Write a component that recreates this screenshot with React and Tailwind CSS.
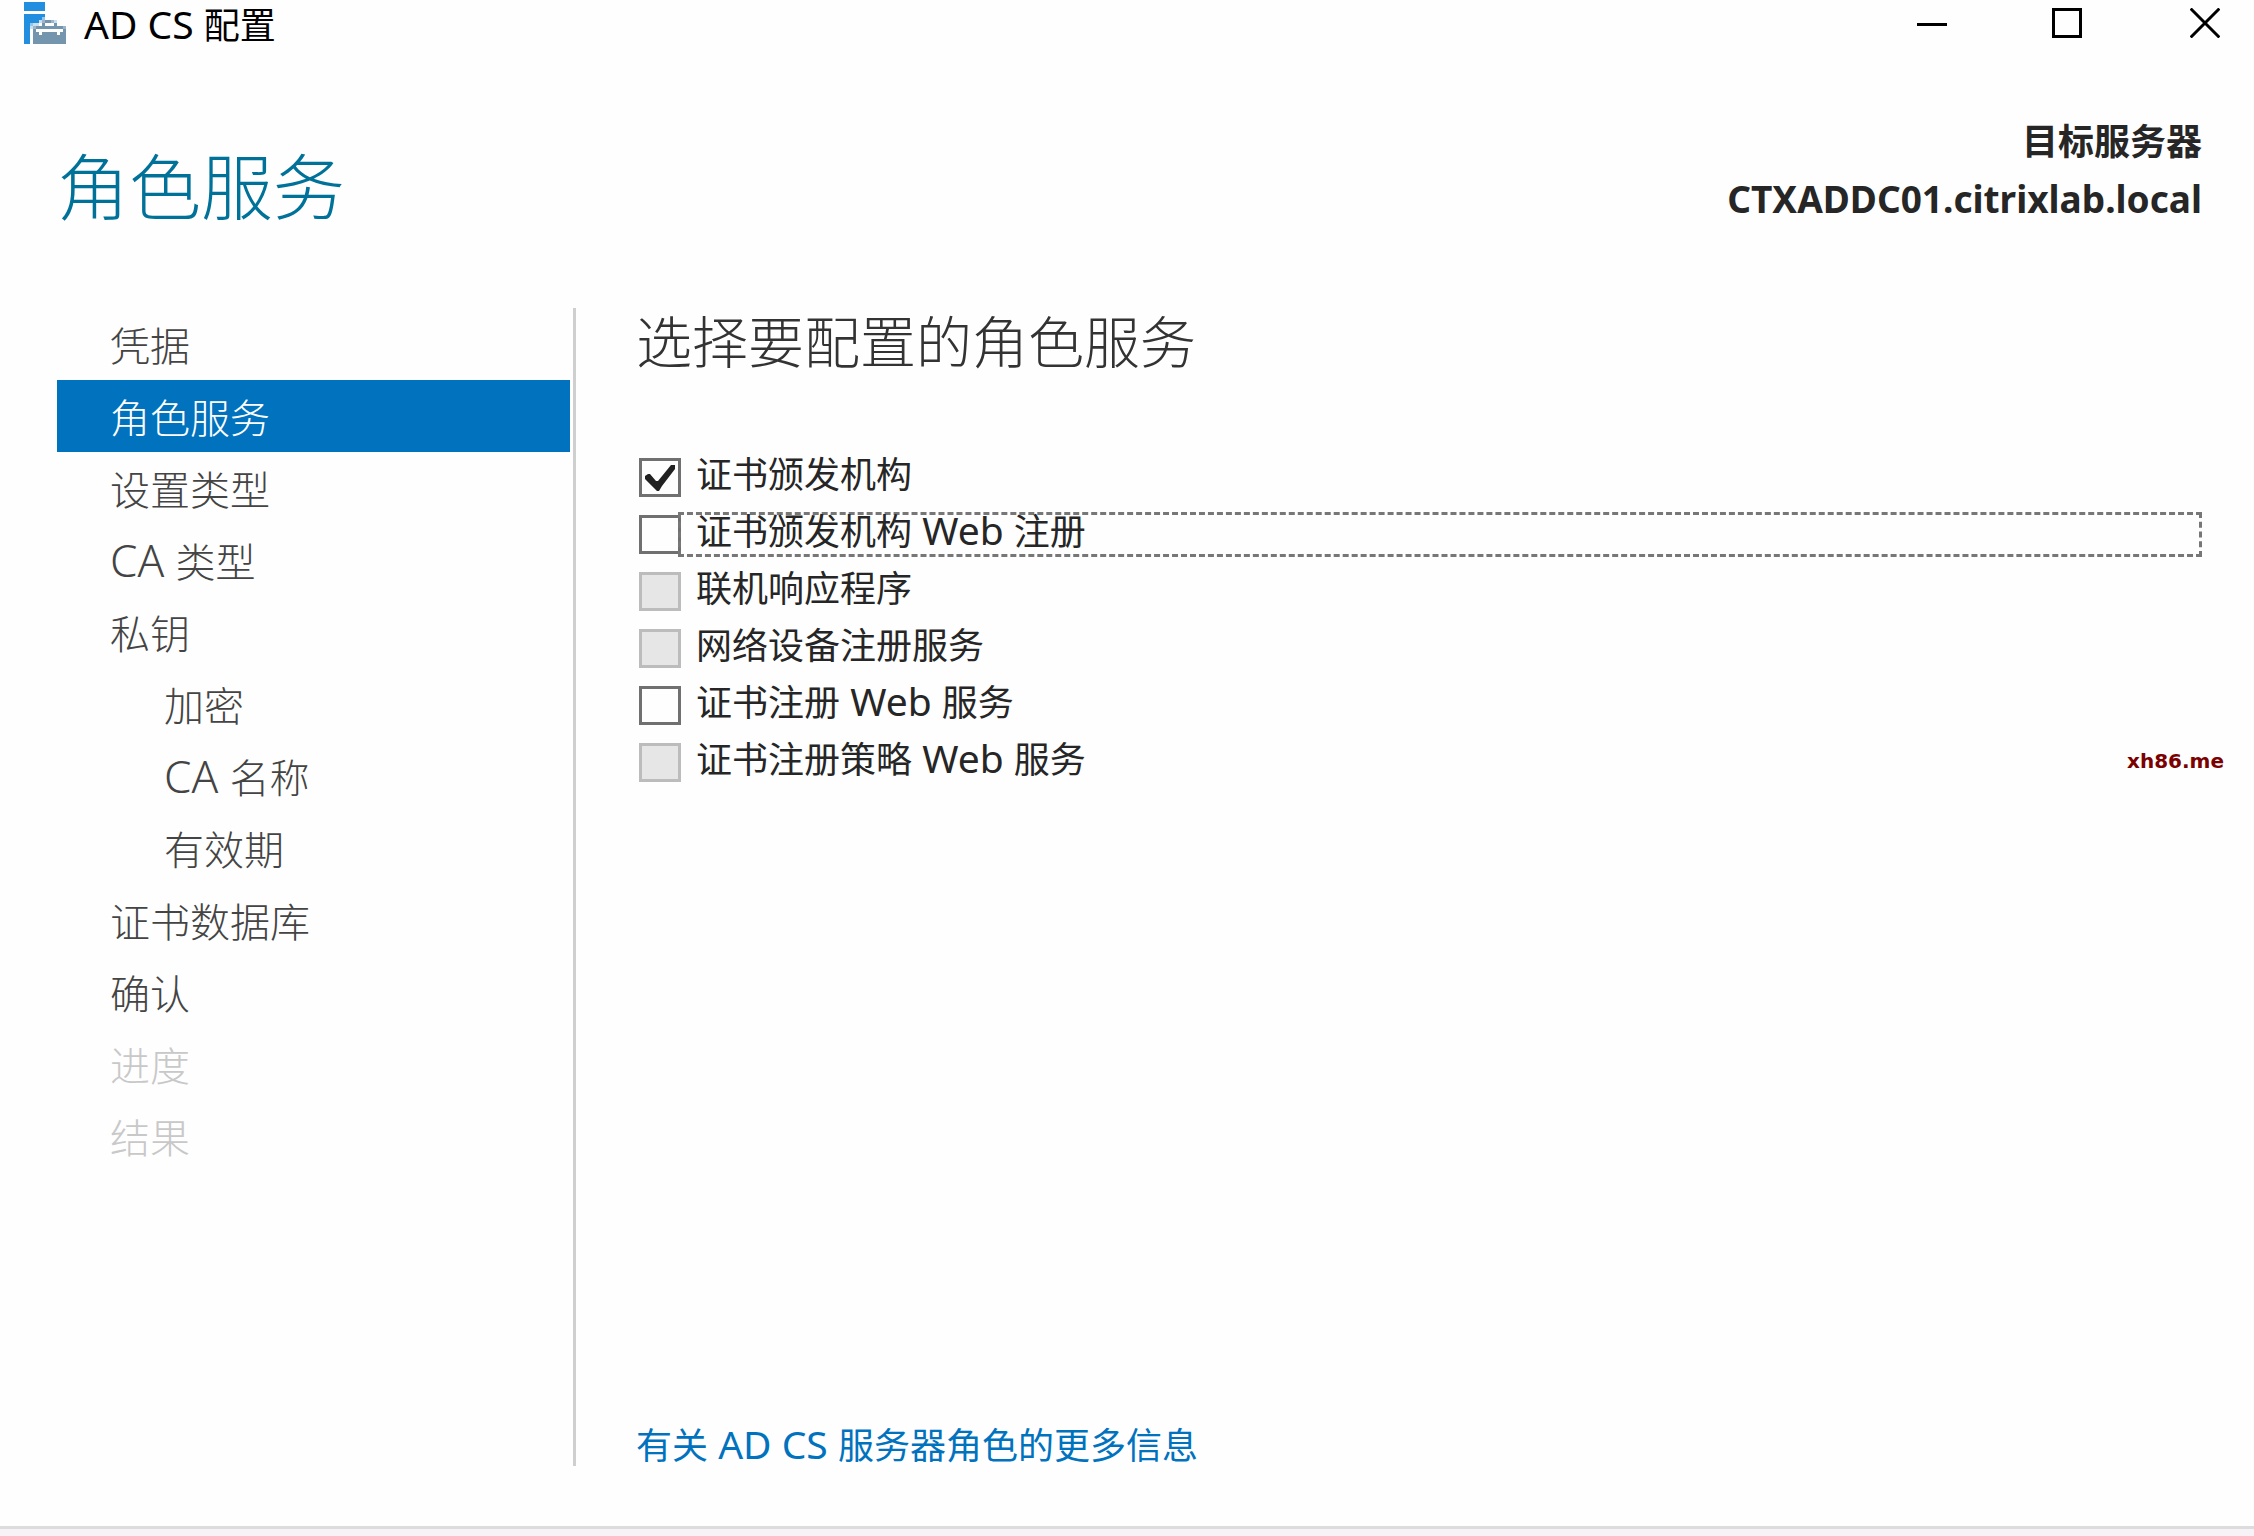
import React from 'react';

const STEPS = [
  { name: '凭据' },
  { name: '角色服务', active: true },
  { name: '设置类型' },
  { name: 'CA 类型' },
  { name: '私钥' },
  { name: '加密', nested: true },
  { name: 'CA 名称', nested: true },
  { name: '有效期', nested: true },
  { name: '证书数据库' },
  { name: '确认' },
  { name: '进度', disabled: true },
  { name: '结果', disabled: true }
];

const ROLES = [
  { id: 'ca', name: '证书颁发机构', checked: true },
  { id: 'ca-web', name: '证书颁发机构 Web 注册', focused: true },
  { id: 'responder', name: '联机响应程序', disabled: true },
  { id: 'ndes', name: '网络设备注册服务', disabled: true },
  { id: 'ces', name: '证书注册 Web 服务' },
  { id: 'cep', name: '证书注册策略 Web 服务', disabled: true }
];

// Latin runs are set slightly larger than the Chinese text around them
function Mixed({ text, latin }) {
  return text.split(/([ A-Za-z]+)/).map((part, idx) =>
    idx % 2 ? (
      <span key={idx} className={`leading-0 ${latin}`}>{part}</span>
    ) : (
      part
    )
  );
}

function AppIcon() {
  return (
    <svg viewBox="0 0 14 14" className="w-[42px] h-[42px]" shapeRendering="crispEdges" aria-hidden="true">
      <path fill="#218ee0" d="M0 0h7v3H0zM0 4h7v1H6v1H5v1H2v7H0z" />
      <path fill="#8fc7f0" d="M6 5h1v1H6zM2 7h1v1H2z" />
      <path fill="#c9dfee" d="M5 6h1v1H5zM3 7h2v1H3zM2 8h1v1H2zM10 6h1v1h-1z" />
      <path fill="#9db5c8" d="M6 6h1v1H6zM9 6h1v1H9zM3 8h1v1H3zM13 8h1v1h-1z" />
      <path
        fill="#7396ae"
        d="M7 6h2v1H7zM6 7h1v1H6zM10 7h1v1h-1zM4 8h9v1H4zM3 9h1v1H3zM13 9h1v1h-1zM3 10h2v1H3zM6 10h5v1H6zM12 10h2v1h-2zM3 11h11v3H3z"
      />
    </svg>
  );
}

function TitleBar() {
  return (
    <div className="flex items-start justify-between pl-6 pr-[34px] pt-[2px]">
      <div className="flex items-start gap-[18px]">
        <AppIcon />
        <span className="pt-1 text-[36px] leading-[40px] text-black">
          <Mixed text="AD CS 配置" latin="text-[39px]" />
        </span>
      </div>
      <div className="flex pt-[6px]">
        <button aria-label="最小化" className="mr-[105px]">
          <svg viewBox="0 0 10 10" className="w-[30px] h-[30px]" shapeRendering="crispEdges">
            <path d="M0 5h10v1H0z" />
          </svg>
        </button>
        <button aria-label="最大化" className="mr-[108px]">
          <svg viewBox="0 0 10 10" className="w-[30px] h-[30px]" shapeRendering="crispEdges">
            <path d="M0.5 0.5h9v9h-9z" fill="none" stroke="#000" />
          </svg>
        </button>
        <button aria-label="关闭">
          <svg viewBox="0 0 10 10" className="w-[30px] h-[30px]">
            <path d="M0.2 0.2l9.6 9.6M9.8 0.2l-9.6 9.6" stroke="#000" />
          </svg>
        </button>
      </div>
    </div>
  );
}

function Steps() {
  return (
    <nav className="w-[519px] shrink-0 border-r-[3px] border-[#cfcfcf] pr-[3px]">
      <ul>
        {STEPS.map((step) => (
          <li key={step.name}>
            <button
              disabled={step.disabled}
              className={`block w-full pt-1 text-left text-[40px] leading-[68px] font-light ${
                step.nested ? 'pl-[107px]' : 'pl-[53px]'
              } ${
                step.active
                  ? 'bg-[#0072be] text-white'
                  : step.disabled
                    ? 'text-[#c8c8c8]'
                    : 'text-[#444444]'
              }`}
            >
              <Mixed text={step.name} latin="text-[44px]" />
            </button>
          </li>
        ))}
      </ul>
    </nav>
  );
}

function RoleOption({ role }) {
  return (
    <li className="flex items-center py-[6px]">
      <span className="grid shrink-0">
        <input
          id={role.id}
          type="checkbox"
          defaultChecked={role.checked}
          disabled={role.disabled}
          className="peer col-start-1 row-start-1 appearance-none w-[42px] h-[39px] border-[3px] border-[#707070] disabled:border-[#bcbcbc] disabled:bg-[#e6e6e6]"
        />
        <svg
          viewBox="0 0 42 39"
          className="col-start-1 row-start-1 w-[42px] h-[39px] pointer-events-none opacity-0 peer-checked:opacity-100"
          aria-hidden="true"
        >
          <path d="M6 18l3-2h2l6 7h2L32 7h4v4L23 28l-3 5h-2L6 21z" fill="#212121" />
        </svg>
      </span>
      <label
        htmlFor={role.id}
        className={`flex-1 -ml-[3px] pl-[15px] pb-[6px] border-[3px] border-dashed text-[36px] leading-[33px] text-[#262626] ${
          role.focused ? 'border-[#777777]' : 'border-transparent'
        }`}
      >
        <Mixed text={role.name} latin="text-[39px]" />
      </label>
    </li>
  );
}

export default function App() {
  return (
    <div className="relative min-h-screen flex flex-col bg-[#fefefe] font-['Noto_Sans','Noto_Sans_CJK_SC',sans-serif]">
      <TitleBar />

      <header className="flex items-start justify-between pl-[57px] pr-[52px] pt-[67px] pb-[74px]">
        <h1 className="pt-[25px] text-[72px] leading-[96px] font-light text-[#007299]">角色服务</h1>
        <div className="text-right text-[36px] leading-[57px] font-bold text-[#262626]">
          <div>目标服务器</div>
          <div className="text-[37px] leading-[57px]">CTXADDC01.citrixlab.local</div>
        </div>
      </header>

      <div className="flex flex-1 pl-[57px] pr-[52px] mb-[60px]">
        <Steps />
        <main className="flex-1 flex flex-col pl-[60px]">
          <h2 className="text-[56px] leading-[66px] font-light text-[#333333]">选择要配置的角色服务</h2>
          <ul className="pl-[3px] pt-[75px]">
            {ROLES.map((role) => (
              <RoleOption key={role.id} role={role} />
            ))}
          </ul>
          <a href="#more" className="mt-auto self-start text-[36px] leading-[40px] text-[#0072be]">
            <Mixed text="有关 AD CS 服务器角色的更多信息" latin="text-[39px]" />
          </a>
        </main>
      </div>

      <footer className="h-[10px] border-t-[3px] border-[#dcdcdc] bg-[#f7f2f5]" />

      <span className="absolute right-[30px] top-[749px] font-['DejaVu_Sans',sans-serif] font-bold text-[20px] leading-6 text-[#7b0000]">
        xh86.me
      </span>
    </div>
  );
}
